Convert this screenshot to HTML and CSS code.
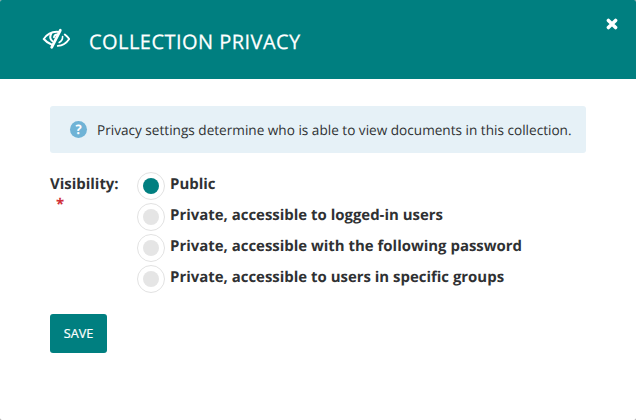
FILE: index.html
```html
<!DOCTYPE html>
<html lang="en">
<head>
<meta charset="utf-8">
<title>Collection Privacy</title>
<link rel="stylesheet" href="styles.css">
</head>
<body>
<div class="modal">
  <header class="header">
    <svg class="eye" viewBox="0 0 28 22" width="28" height="22"><g fill="none" stroke="#fff" stroke-linecap="round"><path stroke-width="2" d="M9.500 16.500C6 15.300 3.500 13 1.800 11C5 6.200 10 3.300 16.500 3.900"/><path stroke-width="1.900" d="M22.800 6.500C24.500 7.700 26 9.300 27.200 11C24.500 15 20.500 17.600 15.800 17.900"/><path stroke-width="2.800" d="M18.300 2.300L9.700 19.300"/><path stroke-width="2" d="M9.300 5.500C7.700 8.500 8.200 11.500 10.500 13.300M12 9.200C12.200 7.800 13 6.900 14.300 6.500"/><path stroke-width="1.600" d="M20.600 8.500C20.700 11 19.300 13.300 17.200 14.500"/></g></svg>
    <h1 class="title">COLLECTION PRIVACY</h1>
    <button class="close" aria-label="Close"><svg viewBox="0 0 12 12" width="12" height="12"><path d="M2.400 2.400L9.600 9.600M9.600 2.400L2.400 9.600" stroke="#fff" stroke-width="3.500" stroke-linecap="round"/></svg></button>
  </header>
  <main class="content">
    <div class="notice"><span class="help">?</span><span class="message">Privacy settings determine who is able to view documents in this collection.</span></div>
    <div class="field">
      <div class="label">Visibility:<span class="required">*</span></div>
      <div class="options">
        <label class="option"><span class="radio checked"></span><span class="name">Public</span></label>
        <label class="option"><span class="radio"></span><span class="name">Private, accessible to logged-in users</span></label>
        <label class="option"><span class="radio"></span><span class="name">Private, accessible with the following password</span></label>
        <label class="option"><span class="radio"></span><span class="name">Private, accessible to users in specific groups</span></label>
      </div>
    </div>
    <button class="save">SAVE</button>
  </main>
</div>
</body>
</html>
```
FILE: styles.css
```css
* { box-sizing: border-box; }
body { margin: 0; background: #999; font-family: "Open Sans", sans-serif; color: #2f3133; text-rendering: geometricPrecision; }
.modal { width: 636px; height: 420px; background: #fff; overflow: hidden; border-radius: 2px; }
.header { height: 79px; background: #007f80; display: flex; align-items: flex-start; padding: 0 18px 0 42px; }
.eye { margin-top: 28px; flex: none; }
.title { margin: 27px 0 0 19px; font-size: 20px; line-height: 30px; font-weight: 400; letter-spacing: 0.46px; -webkit-text-stroke: 0.25px #fff; color: #fff; flex: 1; }
.close { border: 0; padding: 0; background: none; margin-top: 18px; display: flex; }
.content { padding: 27px 50px 0; }
.notice { height: 47px; background: #e6f1f7; border-radius: 3px; display: flex; align-items: center; padding-left: 20px; font-size: 13.6px; white-space: nowrap; }
.help { width: 17px; height: 17px; border-radius: 50%; background: #6fb3d6; color: #fff; font-size: 13px; font-weight: 700; line-height: 17px; text-align: center; margin-right: 10px; }
.field { display: flex; margin-top: 18px; font-size: 14.95px; font-weight: 700; line-height: 20px; }
.label { width: 87px; padding-top: 3px; }
.required { display: block; color: #d02f38; padding-left: 6px; }
.option { display: flex; height: 31px; white-space: nowrap; }
.radio { width: 28px; height: 28px; border: 1px solid #e2e2e2; border-radius: 50%; margin: 1px 5px 0 0; display: flex; align-items: center; justify-content: center; }
.radio::after { content: ""; width: 16px; height: 16px; border-radius: 50%; background: #e5e5e5; }
.radio.checked::after { background: #007f80; }
.name { padding-top: 3px; }
.save { display: block; margin-top: 19px; width: 57px; height: 39px; padding: 0 0 2px; border: 0; border-radius: 3px; background: #007f80; color: #fff; font: 400 12.7px "Open Sans", sans-serif; -webkit-text-stroke: 0.2px #fff; }
```
